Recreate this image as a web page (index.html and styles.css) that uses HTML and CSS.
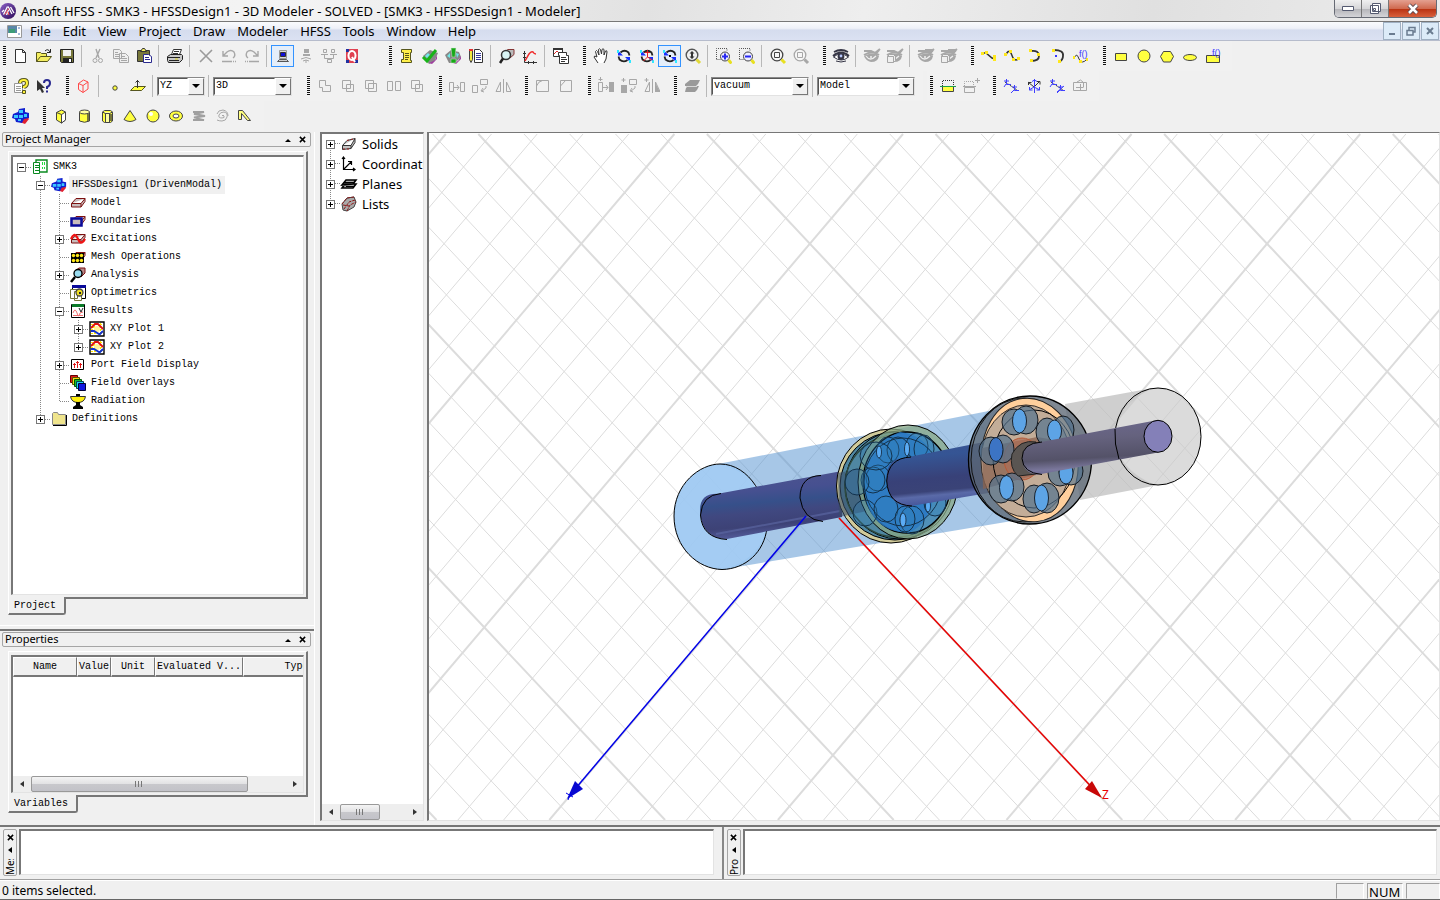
FILE: index.html
```html
<!DOCTYPE html>
<html lang="en">
<head>
<meta charset="utf-8">
<title>Ansoft HFSS</title>
<link rel="stylesheet" href="styles.css">
</head>
<body>
<svg class="defs" aria-hidden="true">
  <defs>
    <linearGradient id="rod" x1="0" y1="0" x2="0.18" y2="1"><stop offset="0" stop-color="#50558f"/><stop offset=".35" stop-color="#465090"/><stop offset=".52" stop-color="#36508a"/><stop offset=".66" stop-color="#404880"/><stop offset=".85" stop-color="#3d4276"/><stop offset="1" stop-color="#525a98"/></linearGradient>
    <linearGradient id="rod2" x1="0" y1="0" x2="0.18" y2="1"><stop offset="0" stop-color="#3f4f92"/><stop offset=".35" stop-color="#355594"/><stop offset=".65" stop-color="#384178"/><stop offset=".82" stop-color="#3a4377"/><stop offset=".88" stop-color="#5a6aa8"/><stop offset="1" stop-color="#45559a"/></linearGradient>
    <linearGradient id="rod3" x1="0" y1="0" x2="0.15" y2="1"><stop offset="0" stop-color="#6d6990"/><stop offset=".4" stop-color="#65627e"/><stop offset=".75" stop-color="#545268"/><stop offset=".92" stop-color="#7a779c"/><stop offset="1" stop-color="#6d6a94"/></linearGradient>
    <linearGradient id="logo" x1="0" y1="0" x2="1" y2="1"><stop offset="0" stop-color="#8c62c8"/><stop offset="1" stop-color="#2c0a58"/></linearGradient>
    <g id="down-right"><path class="major" d="M0 0l644 686"/><path class="minor" d="M45.7 0l644 686M91.4 0l644 686M137.2 0l644 686M182.9 0l644 686"/></g>
    <g id="down-left"><path class="major" d="M0 0l-582.3 686"/><path class="minor" d="M45.7 0l-582.3 686M91.4 0l-582.3 686M137.2 0l-582.3 686M182.9 0l-582.3 686"/></g>
    <symbol id="s-cut" viewBox="0 0 16 16"><path fill="none" stroke="#a7a7a7" stroke-width="1.4" d="M6 1l3 9M10 1L6 10"/><circle cx="5" cy="12.500" r="2" fill="none" stroke="#a7a7a7"/><circle cx="10.500" cy="12.500" r="2" fill="none" stroke="#a7a7a7"/></symbol>
    <symbol id="s-undo" viewBox="0 0 16 16"><path fill="none" stroke="#a7a7a7" stroke-width="1.400" d="M2 3v5h5M2.500 7.500L6 4q4-3 7 0 2 4-1 6"/><path stroke="#a7a7a7" stroke-width="1.500" stroke-dasharray="10 1 1 1 1 1" d="M1 13.500h14"/></symbol>
    <symbol id="s-rot" viewBox="0 0 16 16"><path fill="none" stroke="#222" stroke-width="1.800" d="M4.500 4.500q4-3.500 8 0l1 3M11.500 12q-4 3-8-.5l-1-3"/><path fill="#1830ff" d="M2 2.500v5h5zM14 14V9H9z"/><path fill="#30e8ff" d="M1 2h2v3H1zM13 12h2v3h-2z"/></symbol>
    <symbol id="s-eye" viewBox="0 0 18 16"><path fill="none" stroke="currentColor" stroke-width="1.800" d="M2 4q7-4 14 0M1 8q8-7 16 0"/><path fill="#fff" stroke="currentColor" d="M1.500 9q7-6 15 0-7 6-15 0z"/><circle cx="9" cy="8.500" r="3.400" fill="currentColor"/><circle cx="9" cy="8" r="1.400" fill="#b8c8ff"/><path stroke="currentColor" d="M4 13q5 2 10 0" fill="none"/></symbol>
    <symbol id="s-eyex" viewBox="0 0 18 16"><path fill="none" stroke="#a7a7a7" stroke-width="2" d="M1 3h7l4 2 5-4M1 7q8-5 15 0M16 2l-6 7"/><path fill="#a7a7a7" d="M1 8q8-5 15 0-1 6-8 6-5-1-7-6z"/><path stroke="#efefef" stroke-width="1.300" fill="none" d="M3 8q4 6 10 0M7 9h2"/></symbol>
    <symbol id="s-eyebox" viewBox="0 0 18 16"><use href="#s-eyex"/><path fill="#efefef" stroke="#a7a7a7" d="M1.500 8.500l2-2h6v6l-2 2h-6zM1.500 8.500h6v6M7.500 8.500l2-2"/></symbol>
    <symbol id="s-zoomsel" viewBox="0 0 16 16"><path fill="none" stroke="#555" stroke-dasharray="1 1" d="M.5 11V.5H11v3M.5 11.500H5"/><circle cx="9" cy="8.500" r="4.500" fill="#eef" stroke="#444"/><path stroke="#e8e020" stroke-width="3" d="M12.500 12l3 3.500"/></symbol>
    <symbol id="s-mag" viewBox="0 0 16 16"><circle cx="7" cy="7" r="5.800" fill="#fff" fill-opacity=".4" stroke="currentColor" stroke-width="1.300"/><path fill="none" stroke="currentColor" d="M4.500 4.500h5v5h-5z"/></symbol>
    <symbol id="s-moved" viewBox="0 0 16 16"><path fill="none" stroke="#a7a7a7" d="M.5 4.500h4v9h-4zM11.500 4.500h4v9h-4zM5 9.500h5M8 7l2 2.500-2 2.500"/></symbol>
    <symbol id="s-rotd" viewBox="0 0 16 16"><path fill="none" stroke="#a7a7a7" d="M.5 7.500h5v7h-5zM8.500 1.500h7v5h-7zM14 8v2l-4 3M11 10l-2 3 3 1"/></symbol>
    <symbol id="s-mir" viewBox="0 0 16 16"><path fill="none" stroke="#a7a7a7" d="M8.500 1v14M1 13.500h4.500V4zM11.500 4v9.500H16z"/></symbol>
    <symbol id="s-cs" viewBox="0 0 16 16"><path fill="none" stroke="#333" stroke-dasharray="2 1" d="M2 4l12 8"/><path fill="none" stroke="#4040ff" d="M3.500 1v5.500H8M3 6l-2 3M1 3h5M11.500 7v5.500H16M11 12l-3 3M9 9h5"/></symbol>
    <symbol id="s-box" viewBox="0 0 16 16"><path fill="#c8bcbc" stroke="#7c1010" d="M1.500 8.500L6 3.500h9v3l-4 5.500H1.500zM1.500 8.500H11l4-5M11 8.500V12"/></symbol>
    <symbol id="s-hfss" viewBox="0 0 18 16"><path fill="#e02030" d="M5 13l8 3 4-5-3-4z"/><path fill="#1020d0" d="M1 6l5-2 1-3 6-1v4l4 1v5l-5 1-2 4-6-1-1-3-3-1z"/><path fill="#38c8ff" d="M2 7h4v3H2zM7 2h4v3H7zM7 7h4v3H7zM6 11h3v2H6zM12 6h3v3h-3z"/></symbol>
    <symbol id="s-plot" viewBox="0 0 16 16"><path fill="#fff" stroke="#000" stroke-width="1.400" d="M1 1h14v14H1z"/><path stroke="#ffe600" stroke-dasharray="2 1" d="M2 3.500h12M2 8.500h12M3 6.500h10M2 12.500h12M5.500 2v12M11.500 2v12"/><circle cx="8" cy="8" r="3" fill="#fff39a"/><path fill="none" stroke="#e01010" stroke-width="1.800" d="M2 7l4-4h3l5 5"/><path fill="none" stroke="#1030d0" stroke-width="1.800" d="M2 10h3l5 3h1l3-3"/></symbol>
    <symbol id="s-folder" viewBox="0 0 16 16"><path fill="#efe48c" stroke="#888" d="M1.500 13.500v-11l1-1h4l1 2h7v10z"/><path fill="none" stroke="#000" d="M2 14.500h13.500V4"/></symbol>
    <symbol id="s-close" viewBox="0 0 8 8"><path stroke="#000" stroke-width="1.700" d="M1 1l6 6M7 1L1 7"/></symbol>
  </defs>
</svg>

<header class="titlebar">
  <svg class="logo" viewBox="0 0 16 16"><circle cx="8" cy="8" r="8" fill="url(#logo)"/><path stroke="#fff" stroke-width="1.300" d="M2 9l2-2M3.500 11.500l4-8M6.500 12l2-5M8 3.500l4 7.500M10.500 4l3.500 6"/><path stroke="#ff5a50" d="M5 11.500l3.500-6M9 12l-1-3"/></svg>
  <h1>Ansoft HFSS - SMK3 - HFSSDesign1 - 3D Modeler - SOLVED - [SMK3 - HFSSDesign1 - Modeler]</h1>
  <div class="winbtns">
    <button aria-label="Minimize"><svg width="12" height="6"><path fill="#fff" stroke="#555a70" d="M.5.5h11v4H.5z"/></svg></button>
    <button aria-label="Restore"><svg width="13" height="12"><path fill="#fff" stroke="#555a70" d="M3.500.5h8v8h-8zM1.500 2.500h8v8h-8zM4.500 5.500h2v2h-2z"/></svg></button>
    <button class="x" aria-label="Close"><svg width="14" height="12"><path stroke="#5a4850" stroke-width="4.500" d="M3 2l8 8M11 2l-8 8"/><path stroke="#fff" stroke-width="2.500" d="M3 2l8 8M11 2l-8 8"/></svg></button>
  </div>
</header>

<nav class="menubar">
  <svg class="doc" width="15" height="13"><path fill="#fff" stroke="#999" d="M.5.5h14v12H.5z"/><path fill="#5a86a8" d="M1 1h9v7H1z"/><path fill="#3c9c78" d="M2 4h6v4H2z"/><path stroke="#4878b8" d="M11 3h2M11 9h2"/></svg>
  <button>File</button><button>Edit</button><button>View</button><button>Project</button><button>Draw</button><button>Modeler</button><button>HFSS</button><button>Tools</button><button>Window</button><button>Help</button>
  <div class="mdibtns">
    <button aria-label="Minimize document"><svg width="10" height="10"><path stroke="#6a7c90" stroke-width="2" d="M2 8h6"/></svg></button>
    <button aria-label="Restore document"><svg width="10" height="10"><path fill="none" stroke="#6a7c90" stroke-width="1.500" d="M3 4V1.500h6V6H7M1 4.500h6V9H1z"/></svg></button>
    <button aria-label="Close document"><svg width="10" height="10"><path stroke="#6a7c90" stroke-width="2" d="M2 2l6 6M8 2L2 8"/></svg></button>
  </div>
</nav>

<div class="toolbars">
  <div class="row">
    <div class="tb wide-end"><i class="grip"></i>
      <button aria-label="New"><svg class="ic" viewBox="0 0 16 16"><path fill="#fff" stroke="#333" d="M2.500 1.500h7l3 3v10h-10zM9.500 1.500v3h3"/></svg></button>
      <button aria-label="Open"><svg class="ic" viewBox="0 0 16 16"><path fill="#f4ee60" stroke="#55551c" d="M.5 13.500v-9h4l1 1h5v3M.5 13.500l4-5h11l-4 5z"/><path fill="none" stroke="#222" d="M9 3q3-3 5 1M14.500 1v3.500H11"/></svg></button>
      <button aria-label="Save"><svg class="ic" viewBox="0 0 16 16"><path fill="#77773a" stroke="#222" d="M1.500 1.500h13v13h-12l-1-1z"/><path fill="#efefef" d="M4 2h8v6H4z"/><path fill="#222" d="M4 10h9v5H4z"/><path fill="#fff" d="M10 11h2v3h-2z"/></svg></button>
      <i class="sep"></i>
      <button aria-label="Cut"><svg class="ic"><use href="#s-cut"/></svg></button>
      <button aria-label="Copy"><svg class="ic" viewBox="0 0 16 16"><path fill="#efefef" stroke="#a7a7a7" d="M.5 1.500h6l2 2v7h-8zM6.500 5.500h6l3 3v6h-9zM2 4.500h3M2 6.500h4M2 8.500h4M8 8.500h4M8 10.500h6M8 12.500h6"/></svg></button>
      <button aria-label="Paste"><svg class="ic" viewBox="0 0 16 16"><path fill="#77773a" stroke="#333" d="M1.500 2.500h12v11h-12z"/><path fill="#f4ee60" stroke="#333" d="M4.500 3.500l2-3h2l2 3z"/><path fill="#fff" stroke="#2a2a90" d="M7.500 6.500h5l3 2v6h-8zM9 9.500h4M9 11.500h5"/></svg></button>
      <i class="sep"></i>
      <button aria-label="Print"><svg class="ic" viewBox="0 0 16 16"><path fill="#fff" stroke="#333" d="M4.500 6.500l2-5h8l-2 5zM7 3.500h5M6 5.500h5"/><path fill="#c8c8c8" stroke="#222" d="M.5 8.500l3-2h11l1 1v4l-3 3h-11l-1-2z"/><path stroke="#222" d="M1 9.500h12M2 12.500h10"/><path stroke="#d8d020" d="M8 11h3"/></svg></button>
      <i class="sep"></i>
      <button aria-label="Delete"><svg class="ic" viewBox="0 0 16 16"><path stroke="#9a9a9a" stroke-width="1.600" d="M2 2l12 12M14 2L2 14"/></svg></button>
      <button aria-label="Undo"><svg class="ic"><use href="#s-undo"/></svg></button>
      <button aria-label="Redo"><svg class="ic flip"><use href="#s-undo"/></svg></button>
      <i class="sep"></i>
      <button class="on" aria-label="Local machine"><svg class="ic" viewBox="0 0 16 16"><path fill="#ddd" stroke="#999" d="M4.500 2.500h7v8h-7z"/><path fill="#1010d8" stroke="#333" d="M5.500 4.500h5v4h-5z"/><path fill="#ccc" stroke="#555" d="M2.500 13.500l2-2h7l2 2z"/></svg></button>
      <button aria-label="Remote"><svg class="ic" viewBox="0 0 16 16"><path fill="#a7a7a7" d="M6 1h5v4H6zM5 6h7v2H5z"/><path fill="none" stroke="#a7a7a7" d="M3 11q5-3 10 0M5 13q3-2 6 0M8 12v3"/></svg></button>
      <button aria-label="Distributed"><svg class="ic" viewBox="0 0 16 16"><path fill="none" stroke="#a7a7a7" d="M2.500 1.500h3v3h-3zM10.500 1.500h3v3h-3zM6.500 11.500h4v3h-4zM3.500 7v3.500h9V7"/><path fill="#a7a7a7" d="M0 6h7v1H0zM9 6h7v1H9z"/></svg></button>
      <button aria-label="Queue"><svg class="ic" viewBox="0 0 16 16"><path fill="#e04050" d="M2 1h12v14H2z"/><path fill="#2030a0" d="M2 1h3v3H2zM2 12h3v3H2zM11 12h3v3h-3z"/><ellipse cx="8" cy="7.500" rx="3.500" ry="4.500" fill="none" stroke="#fff" stroke-width="2"/><path stroke="#fff" stroke-width="2" d="M8 9l3 5"/></svg></button>
    </div>
    <div class="tb"><i class="grip"></i>
      <button aria-label="Notes"><svg class="ic" viewBox="0 0 16 16"><path fill="#fff04a" stroke="#55551c" d="M2.500 1.500h10v3h-1v8h1v2h-10v-3h2v-7h-2zM6 5.500h4M6 7.500h4M6 9.500h4M6 11.500h3"/></svg></button>
      <button aria-label="Validate"><svg class="ic" viewBox="0 0 16 16"><path fill="#888" d="M1 8l7-6 8 3-4 9-5 2z"/><path fill="#a040a0" d="M7 15l6-3 2-5v4l-5 5z"/><path fill="#70e8e8" d="M3 8l3-3 2 2-3 3z"/><path fill="none" stroke="#18b418" stroke-width="3" d="M1 9l4 4L14 2"/></svg></button>
      <button aria-label="Analyze"><svg class="ic" viewBox="0 0 16 16"><path fill="#888" d="M0 7l6-5 8 2 2 5-6 6H4z"/><path fill="#a040a0" d="M8 15l5-2 3-5v3l-5 5z"/><path fill="#70e8e8" d="M2 8l3-3v5zM11 5l3 1-2 4z"/><path fill="#18a818" stroke="#cfe8cf" stroke-width=".5" d="M6 0h5L10 9H7zM6 11h5v4H6z"/></svg></button>
      <button aria-label="Solution data"><svg class="ic" viewBox="0 0 16 16"><path fill="#f4e840" stroke="#444" d="M1.500 2.500h3v9l-1.500 3-1.500-3z"/><path fill="#e03030" d="M1 1h4v2H1z"/><path fill="#fff" stroke="#333" d="M6.500 1.500h5l3 3v10h-8z"/><path stroke="#3838a0" d="M8 5.500h5M8 7.500h5M8 9.500h5M8 11.500h5"/></svg></button>
      <i class="sep"></i>
      <button aria-label="Inspect"><svg class="ic" viewBox="0 0 16 16"><path fill="#bbb" stroke="#843434" d="M5 4l4-2.500h6v5L11 10"/><circle cx="7" cy="7" r="4.500" fill="#d8f4f4" stroke="#333" stroke-width="1.500"/><path stroke="#222" stroke-width="2.500" d="M4 10.500L1 15"/></svg></button>
      <button aria-label="Report"><svg class="ic" viewBox="0 0 16 16"><path fill="none" stroke="#333" d="M2.500 3v11.500H15M1 5.500h3M1 9.500h3M6.500 13v3M11.500 13v3"/><path fill="none" stroke="#f02828" stroke-width="1.500" d="M3 13l4-7q2-3 4-2 1 2 3 2"/></svg></button>
      <i class="sep"></i>
      <button aria-label="Copy image"><svg class="ic" viewBox="0 0 16 16"><path fill="#fff" stroke="#333" d="M.5.5h9v8h-9z"/><path fill="#333" d="M0 0h10v2H0z"/><path fill="none" stroke="#e03030" d="M1 6l3-3 3 3"/><path fill="#fff" stroke="#333" d="M5.500 4.500h8v3h2v8h-9v-8h-1zM8 9.500h5M8 11.500h6M8 13.500h4"/></svg></button>
    </div>
    <div class="tb"><i class="grip"></i>
      <button aria-label="Pan"><svg class="ic" viewBox="0 0 16 16"><path fill="#fff" stroke="#333" d="M5 15L1 9q0-2 3 0L2.500 3.500q1-2 2 0L6 7 5.500 1.500q1-1.500 2 0L8.500 6 9 1.500q1-1.500 2 0L11 7l1.500-4q1.500-1 1.500 1L13 11l-2 4"/></svg></button>
      <button aria-label="Rotate"><svg class="ic"><use href="#s-rot"/></svg></button>
      <button aria-label="Rotate axis"><svg class="ic" viewBox="0 0 16 16"><use href="#s-rot"/><path fill="none" stroke="#e02020" d="M8.500 2v7l-4 4M8.500 9l5 3M6 4.500h5"/></svg></button>
      <button class="on" aria-label="Rotate screen"><svg class="ic" viewBox="0 0 16 16"><use href="#s-rot"/><path fill="#000" d="M7 7h2v2H7z"/></svg></button>
      <button aria-label="Dynamic zoom"><svg class="ic" viewBox="0 0 16 16"><circle cx="7" cy="7" r="5.800" fill="none" stroke="#555" stroke-width="1.400"/><path stroke="#333" stroke-width="2" d="M7 4v6"/><path fill="#333" d="M4.500 5.500L7 3l2.500 2.500zM4.500 8.500L7 11l2.500-2.500z"/><path stroke="#e0d838" stroke-width="3" d="M11.500 11.500l3.500 3.500"/></svg></button>
      <i class="sep"></i>
      <button aria-label="Zoom in"><svg class="ic" viewBox="0 0 16 16"><use href="#s-zoomsel"/><path stroke="#2828f0" stroke-width="2" d="M9 5.500v6M6 8.500h6"/></svg></button>
      <button aria-label="Zoom out"><svg class="ic" viewBox="0 0 16 16"><use href="#s-zoomsel"/><path stroke="#2828f0" stroke-width="2" d="M6 8.500h6"/></svg></button>
      <i class="sep"></i>
      <button aria-label="Fit all"><svg class="ic" viewBox="0 0 16 16"><use href="#s-mag" color="#444"/><path stroke="#e8e020" stroke-width="3" d="M11.500 11.500l3.500 3.500"/></svg></button>
      <button aria-label="Fit selection"><svg class="ic" viewBox="0 0 16 16"><use href="#s-mag" color="#a7a7a7"/><path stroke="#a7a7a7" stroke-width="3" d="M11.500 11.500l3.500 3.500"/></svg></button>
    </div>
    <div class="tb"><i class="grip"></i>
      <button aria-label="Visibility"><svg class="ic w18" color="#353545"><use href="#s-eye"/></svg></button>
      <i class="sep"></i>
      <button aria-label="Hide"><svg class="ic w18"><use href="#s-eyex"/></svg></button>
      <button aria-label="Hide all"><svg class="ic w18"><use href="#s-eyebox"/></svg></button>
      <i class="sep"></i>
      <button aria-label="Show"><svg class="ic w18"><use href="#s-eyex"/><path fill="#a7a7a7" d="M8 1h8v3H8z"/></svg></button>
      <button aria-label="Show all"><svg class="ic w18"><use href="#s-eyebox"/><path fill="#a7a7a7" d="M8 1h8v3H8z"/></svg></button>
    </div>
    <div class="tb"><i class="grip"></i>
      <button aria-label="Line"><svg class="ic" viewBox="0 0 16 16"><path stroke="#333" stroke-width="1.500" fill="none" d="M2 5h3l6 5 3 1"/><path fill="#ffe81c" d="M0 4h3v3H0zM4 3h3v3H4zM12 7h3v3h-3zM12 10h3v3h-3z"/></svg></button>
      <button aria-label="Spline"><svg class="ic" viewBox="0 0 16 16"><path stroke="#333" stroke-width="1.500" fill="none" d="M2 7q2-6 5-2l2 5q3 4 6 0"/><path fill="#ffe81c" d="M0 5h3v3H0zM5 2h3v3H5zM8 10h3v3H8zM13 9h3v3h-3z"/></svg></button>
      <button aria-label="Arc"><svg class="ic" viewBox="0 0 16 16"><path stroke="#333" stroke-width="1.800" fill="none" d="M4 3q8-1 8 5 0 5-8 5"/><path fill="#ffe81c" d="M2 1h3v3H2zM10 5h3v3h-3zM3 11h3v3H3z"/></svg></button>
      <button aria-label="Center arc"><svg class="ic" viewBox="0 0 16 16"><path stroke="#333" stroke-width="1.800" fill="none" d="M4 2q10 0 9 6 0 4-4 6"/><path fill="#ffe81c" d="M2 1h3v3H2zM8 12h3v3H8z"/><path fill="#3838ff" d="M5 7h2v2H5z"/></svg></button>
      <button aria-label="Equation curve"><svg class="ic" viewBox="0 0 16 16"><path stroke="#333" fill="none" d="M1 10q3-6 5 1 3 6 8 0"/><path fill="#ffe81c" d="M0 8h2v3H0zM6 12h3v3H6zM13 10h2v3h-2z"/><text x="6" y="9" class="fx">f()</text></svg></button>
    </div>
    <div class="tb"><i class="grip"></i>
      <button aria-label="Rectangle"><svg class="ic" viewBox="0 0 16 16"><path fill="#ffff40" stroke="#444" d="M2.500 5.500h11v7h-11z"/></svg></button>
      <button aria-label="Circle"><svg class="ic" viewBox="0 0 16 16"><circle cx="8" cy="8" r="6" fill="#ffff40" stroke="#444"/></svg></button>
      <button aria-label="Polygon"><svg class="ic" viewBox="0 0 16 16"><path fill="#ffff40" stroke="#444" d="M4.500 3.500h7l3 5-3 5.500h-7l-3-5.500z"/></svg></button>
      <button aria-label="Ellipse"><svg class="ic" viewBox="0 0 16 16"><ellipse cx="8" cy="9.500" rx="6.500" ry="3" fill="#ffff40" stroke="#444"/></svg></button>
      <button aria-label="Equation surface"><svg class="ic" viewBox="0 0 16 16"><path fill="#ffff40" stroke="#444" d="M1.500 7.500h13v7h-13z"/><text x="7" y="8" class="fx">f()</text></svg></button>
    </div>
  </div>

  <div class="row">
    <div class="tb"><i class="grip"></i>
      <button aria-label="Help topics"><svg class="ic" viewBox="0 0 16 16"><path fill="#fff" stroke="#999" d="M1.500 5.500h8v9h-8zM3 8.500h5M3 10.500h5M3 12.500h5"/><path fill="none" stroke="#555520" stroke-width="4" d="M7 5q0-3 4-3 3 0 3 3t-3 4v1"/><path fill="none" stroke="#fff23a" stroke-width="2" d="M7 5q0-3 4-3 3 0 3 3t-3 4v1"/><path fill="#fff23a" stroke="#555520" d="M9.500 12.500h3v3h-3z"/></svg></button>
      <button aria-label="What's this"><svg class="ic" viewBox="0 0 16 16"><path fill="#333" d="M1 2v11l3-2 2 4 2-1-2-4h3z"/><path fill="none" stroke="#2a2a90" stroke-width="2" d="M8 5q0-3 3-3t3 3-3 4v2M11 12.500v2"/></svg></button>
    </div>
    <div class="tb"><i class="grip"></i>
      <button aria-label="Solid"><svg class="ic" viewBox="0 0 16 16"><path fill="none" stroke="#ff4848" d="M2.500 5.500l5-3.500 4.500 2v7l-5 3.500-4.500-3zM2.500 5.500l4.500 2 5-3.500M7 7.500v7"/></svg></button>
      <i class="sep"></i>
      <button aria-label="Point"><svg class="ic" viewBox="0 0 16 16"><circle cx="8" cy="10" r="2.200" fill="#ffff40" stroke="#444"/></svg></button>
      <button aria-label="Plane"><svg class="ic" viewBox="0 0 16 16"><path fill="#ffff40" stroke="#555520" d="M.5 12.500l4-4h11l-4 4z"/><path stroke="#333" d="M7.500 2v8M5.500 4.500l2-2 2 2" fill="none"/></svg></button>
      <i class="sep"></i>
      <span class="combo c1"><select aria-label="Drawing plane"><option>YZ</option></select><i></i></span>
      <i class="sep"></i>
      <span class="combo c2"><select aria-label="Movement mode"><option>3D</option></select><i></i></span>
    </div>
    <div class="tb far"><i class="grip"></i>
      <button aria-label="Unite"><svg class="ic" viewBox="0 0 16 16"><path fill="none" stroke="#a7a7a7" d="M2.500 2.500h6v5h5v6h-8v-4h-3z"/></svg></button>
      <button aria-label="Subtract"><svg class="ic" viewBox="0 0 16 16"><path fill="#f1f1f1" stroke="#a7a7a7" d="M2.500 2.500h8v8h-8zM6.500 6.500h7v7h-7z"/></svg></button>
      <button aria-label="Intersect"><svg class="ic" viewBox="0 0 16 16"><path fill="none" stroke="#a7a7a7" d="M2.500 2.500h8v8h-8zM5.500 5.500h8v8h-8z"/></svg></button>
      <button aria-label="Split"><svg class="ic" viewBox="0 0 16 16"><path fill="none" stroke="#a7a7a7" d="M6.500 3.500h-5v9h5zM9.500 3.500h5v9h-5z"/></svg></button>
      <button aria-label="Imprint"><svg class="ic" viewBox="0 0 16 16"><path fill="none" stroke="#a7a7a7" d="M2.500 2.500h8v8h-8zM6.500 6.500h7v7h-7z"/></svg></button>
    </div>
    <div class="tb"><i class="grip"></i>
      <button aria-label="Move"><svg class="ic"><use href="#s-moved"/></svg></button>
      <button aria-label="Rotate object"><svg class="ic"><use href="#s-rotd"/></svg></button>
      <button aria-label="Mirror"><svg class="ic"><use href="#s-mir"/></svg></button>
    </div>
    <div class="tb"><i class="grip"></i>
      <button aria-label="Fillet"><svg class="ic" viewBox="0 0 16 16"><path fill="none" stroke="#a7a7a7" d="M1.500 2.500h12v11h-12zM1.500 8q2-5 6-5.500"/></svg></button>
      <button aria-label="Chamfer"><svg class="ic" viewBox="0 0 16 16"><path fill="none" stroke="#a7a7a7" d="M2.500 2.500h11v11h-11zM2.500 8l5-5.500"/></svg></button>
    </div>
    <div class="tb"><i class="grip"></i>
      <button aria-label="Duplicate along line"><svg class="ic" viewBox="0 0 16 16"><use href="#s-moved"/><path fill="#a7a7a7" d="M11 4h5v10h-5z"/><path stroke="#a7a7a7" d="M2.500-1v4M.5 1.500h4"/></svg></button>
      <button aria-label="Duplicate around axis"><svg class="ic" viewBox="0 0 16 16"><use href="#s-rotd"/><path fill="#a7a7a7" d="M0 7h6v8H0z"/><path stroke="#a7a7a7" d="M2.500 0v4M.5 2h4"/></svg></button>
      <button aria-label="Duplicate mirror"><svg class="ic" viewBox="0 0 16 16"><use href="#s-mir"/><path fill="#a7a7a7" d="M11 4v10h5z"/><path stroke="#a7a7a7" d="M2.500 0v4M.5 2h4"/></svg></button>
    </div>
    <div class="tb"><i class="grip"></i>
      <button aria-label="Assign material"><svg class="ic" viewBox="0 0 16 16"><path fill="#9a9a9a" d="M1 6l5-4h10l-2 4-2 2h3l-2 4-2 2H1l1-4 2-2H1z"/><path stroke="#d8d8d8" d="M2 8.500h11"/></svg></button>
      <i class="sep"></i>
      <span class="combo c3"><select aria-label="Material"><option>vacuum</option></select><i></i></span>
      <i class="sep"></i>
      <span class="combo c3"><select aria-label="Model type"><option>Model</option></select><i></i></span>
    </div>
    <div class="tb far"><i class="grip"></i>
      <button aria-label="Section"><svg class="ic" viewBox="0 0 16 16"><path fill="none" stroke="#333" stroke-dasharray="1 1" d="M2.500 8V2.500h11V8"/><path fill="#ffff40" stroke="#444" d="M2.500 8.500h11v5h-11z"/><path stroke="#20a048" d="M0 8.500h16"/></svg></button>
      <button aria-label="Add section"><svg class="ic" viewBox="0 0 16 16"><path fill="none" stroke="#a7a7a7" d="M1.500 9.500h10v5h-10zM0 8.500h13M14.500 0v5M12 2.500h5"/><path fill="none" stroke="#a7a7a7" stroke-dasharray="1 1" d="M1.500 8V3.500h9V8"/></svg></button>
    </div>
    <div class="tb"><i class="grip"></i>
      <button aria-label="Relative CS"><svg class="ic"><use href="#s-cs"/></svg></button>
      <button aria-label="Rotated CS"><svg class="ic" viewBox="0 0 16 16"><path fill="none" stroke="#333" d="M2 4l6 5 6-6M2.500 7V4.500h3M11 3.500h3v3"/><path fill="none" stroke="#4040ff" d="M8.500 1v14M6 3.500L8.500 2 11 3.500M3 12l5-3 6 3M3.500 9v3h3M13.500 9v3h-3"/></svg></button>
      <button aria-label="Both CS"><svg class="ic" viewBox="0 0 16 16"><use href="#s-cs"/><path stroke="#4040ff" d="M8 14l7-6"/></svg></button>
      <button aria-label="Face CS"><svg class="ic" viewBox="0 0 16 16"><path fill="none" stroke="#a7a7a7" d="M1.500 4.500h13v8h-13zM5 4l3.500-2 3 2.500v5M4 9.500h7M8.500 6v6"/></svg></button>
    </div>
  </div>

  <div class="row">
    <div class="tb"><i class="grip"></i>
      <button aria-label="HFSS design"><svg class="ic w18"><use href="#s-hfss"/></svg></button>
    </div>
    <div class="tb"><i class="grip"></i>
      <button aria-label="Box"><svg class="ic" viewBox="0 0 16 16"><path fill="#ffff40" stroke="#444" d="M3.500 4.500l5-2.500 4 2v8l-4 3-5-3z"/><path fill="#fff" stroke="#444" d="M8.500 6.500l4-2.500v8l-4 3z"/><path stroke="#444" d="M3.500 4.500l5 2"/></svg></button>
      <button aria-label="Cylinder"><svg class="ic" viewBox="0 0 16 16"><path fill="#ffff40" stroke="#444" d="M3.500 4v9q5 2.500 10 0V4z"/><path fill="#77773a" d="M11 5h2v8h-2z"/><ellipse cx="8.500" cy="4" rx="5" ry="2" fill="#ffffa0" stroke="#444"/></svg></button>
      <button aria-label="Regular polyhedron"><svg class="ic" viewBox="0 0 16 16"><path fill="#ffff40" stroke="#444" d="M3.500 4l2-1.500h6l2 1.500v9l-2 1.500h-6l-2-1.500z"/><path fill="#77773a" d="M11 6h2v7h-2z"/><path stroke="#444" fill="#ffffa0" d="M6.500 5.500h4v9h-4zM3.500 4l3 1.500h4L13.500 4"/></svg></button>
      <button aria-label="Cone"><svg class="ic" viewBox="0 0 16 16"><path fill="#ffff40" stroke="#444" d="M8 2.500l6 9q-6 4-12 0z"/></svg></button>
      <button aria-label="Sphere"><svg class="ic" viewBox="0 0 16 16"><circle cx="8" cy="8" r="6" fill="#ffff40" stroke="#444"/><circle cx="6" cy="6" r="2" fill="#fff"/></svg></button>
      <button aria-label="Torus"><svg class="ic" viewBox="0 0 16 16"><ellipse cx="8" cy="8" rx="6.500" ry="5" fill="#ffff40" stroke="#444"/><ellipse cx="8" cy="8" rx="3" ry="2" fill="#fff" stroke="#444"/></svg></button>
      <button aria-label="Helix"><svg class="ic" viewBox="0 0 16 16"><path stroke="#a0a0a0" stroke-width="1.800" fill="none" d="M2 4h11l-10 2 11 2-11 1.500 10 2.500H2"/></svg></button>
      <button aria-label="Spiral"><svg class="ic" viewBox="0 0 16 16"><path stroke="#a7a7a7" fill="none" d="M8 8q1-2 2 0t-2 2q-4 0-3-3 1-3 5-3 4 1 3 5-1 4-5 4-3 0-5-1M3 6q1-4 6-4 5 1 5 6"/></svg></button>
      <button aria-label="Bondwire"><svg class="ic" viewBox="0 0 16 16"><path fill="#ffff80" stroke="#444" d="M1.500 11.500v-9h4l8 10h-3l-6-7v6z"/></svg></button>
    </div>
  </div>
</div>

<main class="work">
  <aside class="dock">
    <section class="pane grow">
      <div class="cap"><h2>Project Manager</h2><button aria-label="Collapse"><svg width="6" height="4"><path d="M0 4l3-3 3 3z"/></svg></button><button aria-label="Close"><svg width="7" height="7"><use href="#s-close"/></svg></button></div>
      <div class="frame"><div class="well">
        <ul class="tree">
          <li class="root"><div><button class="ex" aria-label="Collapse SMK3"></button><svg class="ic" viewBox="0 0 16 16"><path fill="#fff" stroke="#0a8a20" stroke-width="1.400" d="M4 1h11v12H4z"/><path fill="#20e040" d="M10 3h1v3h-1zM12 3h1v3h-1zM10 8h1v2h-1zM12 8h1v2h-1z"/><path fill="#fff" stroke="#0a8a20" d="M1.500 3.500h6v11h-6zM3 6.500h4M3 8.500h4M3 11.500h4"/></svg><span>SMK3</span></div>
            <ul>
              <li><div><button class="ex" aria-label="Collapse design"></button><svg class="ic"><use href="#s-hfss"/></svg><span class="sel">HFSSDesign1 (DrivenModal)</span></div>
                <ul>
                  <li><div><svg class="ic"><use href="#s-box"/></svg><span>Model</span></div></li>
                  <li><div><svg class="ic" viewBox="0 0 16 16"><use href="#s-box"/><path fill="#c8bcbc" stroke="#0a0a9a" stroke-width="2.500" d="M1.500 5.500h10v7h-10z"/></svg><span>Boundaries</span></div></li>
                  <li><div><button class="ex" aria-label="Expand Excitations"></button><svg class="ic" viewBox="0 0 16 16"><use href="#s-box"/><path fill="none" stroke="#f01414" stroke-width="2.200" d="M1 8q3-7 6-2l2 4q3 4 6-2"/></svg><span>Excitations</span></div></li>
                  <li><div><svg class="ic" viewBox="0 0 16 16"><use href="#s-box"/><path d="M1 4h13v10H1z"/><g fill="#ffe81c"><circle cx="3.500" cy="6.500" r="1.700"/><circle cx="7.500" cy="6.500" r="1.700"/><circle cx="11.500" cy="6.500" r="1.700"/><circle cx="3.500" cy="11.500" r="1.700"/><circle cx="7.500" cy="11.500" r="1.700"/><circle cx="11.500" cy="11.500" r="1.700"/></g></svg><span>Mesh Operations</span></div></li>
                  <li><div><button class="ex" aria-label="Expand Analysis"></button><svg class="ic" viewBox="0 0 16 16"><path fill="#b88" stroke="#7c1010" d="M5 4l4-3h6v5l-4 4"/><circle cx="8" cy="6.500" r="4" fill="#9adcf0" stroke="#000" stroke-width="1.400"/><path stroke="#000" stroke-width="2.500" d="M5 10l-4 5"/></svg><span>Analysis</span></div></li>
                  <li><div><svg class="ic" viewBox="0 0 16 16"><path fill="#fff" stroke="#000" d="M2.500 1.500h13v12h-13z"/><path fill="#0a0a9a" d="M2 0h14v3H2z"/><path fill="#fff" stroke="#77773a" d="M.5 4.500h7v9h-7zM4.500 6.500h7v9h-7z"/><circle cx="9.500" cy="7.500" r="3.500" fill="#f0e020" stroke="#444" stroke-width="1.300"/><path fill="#222" d="M9 7h2v2H9z"/></svg><span>Optimetrics</span></div></li>
                  <li><div><button class="ex" aria-label="Collapse Results"></button><svg class="ic" viewBox="0 0 16 16"><path fill="#fff" stroke="#000" d="M1.500 1.500h13v13h-13z"/><path fill="#0a7a28" d="M2 1h12v3H2z"/><path fill="none" stroke="#f07070" d="M3 10q2-6 4 0t3 0l3-1M3 12.500h10"/><path fill="none" stroke="#222" d="M9 5l2 4 2-4"/></svg><span>Results</span></div>
                    <ul>
                      <li><div><button class="ex" aria-label="Expand plot 1"></button><svg class="ic"><use href="#s-plot"/></svg><span>XY Plot 1</span></div></li>
                      <li><div><button class="ex" aria-label="Expand plot 2"></button><svg class="ic"><use href="#s-plot"/></svg><span>XY Plot 2</span></div></li>
                    </ul></li>
                  <li><div><button class="ex" aria-label="Expand Port Field Display"></button><svg class="ic" viewBox="0 0 16 16"><path fill="#fff" stroke="#000" d="M1.500 2.500h12v10h-12z"/><path stroke="#e01818" fill="none" d="M4.500 6v5M7.500 4v7M10.500 6v5M3 7.500h3M6 5.500h3M9 7.500h3"/></svg><span>Port Field Display</span></div></li>
                  <li><div><svg class="ic" viewBox="0 0 16 16"><path fill="#e01818" stroke="#600" d="M.5.500h7v7h-7z"/><path fill="#f0d818" stroke="#550" d="M2.500 2.500h7v7h-7z"/><path fill="#18c030" stroke="#050" d="M4.500 4.500h7v7h-7z"/><path fill="#20d0f0" stroke="#045" d="M6.500 6.500h7v7h-7z"/><path fill="#1018e0" stroke="#003" d="M8.500 8.500h7v7h-7z"/></svg><span>Field Overlays</span></div></li>
                  <li><div><svg class="ic" viewBox="0 0 16 16"><path fill="#ffee10" stroke="#333" d="M.5 3.500h15q-1 6-7.500 6T.5 3.500z"/><path d="M6 1h4v2H6zM6 9h4v3l3 2v2H3v-2l3-2z"/></svg><span>Radiation</span></div></li>
                </ul></li>
              <li><div><button class="ex" aria-label="Expand Definitions"></button><svg class="ic"><use href="#s-folder"/></svg><span>Definitions</span></div></li>
            </ul></li>
        </ul>
      </div></div>
      <button class="tab">Project</button>
    </section>
    <section class="pane props">
      <div class="cap"><h2>Properties</h2><button aria-label="Collapse"><svg width="6" height="4"><path d="M0 4l3-3 3 3z"/></svg></button><button aria-label="Close"><svg width="7" height="7"><use href="#s-close"/></svg></button></div>
      <div class="frame"><div class="well col">
        <div class="tablebox"><table>
          <colgroup><col class="k1"><col class="k2"><col class="k3"><col class="k4"><col class="k5"></colgroup>
          <thead><tr><th>Name</th><th>Value</th><th>Unit</th><th>Evaluated V...</th><th>Type</th></tr></thead>
        </table></div>
        <div class="hs"><button aria-label="Scroll left"><svg width="4" height="6"><path d="M4 0v6L0 3z"/></svg></button><div class="track"><div class="thumb t1"></div></div><button aria-label="Scroll right"><svg width="4" height="6"><path d="M0 0v6l4-3z"/></svg></button></div>
      </div></div>
      <button class="tab">Variables</button>
    </section>
  </aside>

  <section class="objects">
    <ul class="tree big">
      <li><div><button class="ex" aria-label="Expand Solids"></button><svg class="ic" viewBox="0 0 16 16"><path fill="#c4c4c4" stroke="#333" d="M1.500 9.500L6 4.500l8-2v4l-4 6-8.500 1zM1.500 9.500H10l4-7M10 9.500v3"/><path stroke="#a02020" stroke-dasharray="2 2" d="M6 4.500l8-2M2 13h8"/></svg><span>Solids</span></div></li>
      <li><div><button class="ex" aria-label="Expand Coordinate Systems"></button><svg class="ic" viewBox="0 0 16 16"><path fill="none" stroke="#000" stroke-width="1.200" d="M2.500 1v12.500H14M1 3l1.500-2L4 3M12 12l2 1.500-2 1.500M2.500 13.500L10 6M7 5.500h3.500V9"/></svg><span>Coordinate Systems</span></div></li>
      <li><div><button class="ex" aria-label="Expand Planes"></button><svg class="ic" viewBox="0 0 16 16"><path fill="#aaa" stroke="#000" stroke-width="1.600" d="M1 9l4-5h10l-3 4zM1 12l3-4h11l-3 4z"/><path stroke="#000" d="M3 6.500h10M5 10.500h8"/></svg><span>Planes</span></div></li>
      <li><div><button class="ex" aria-label="Expand Lists"></button><svg class="ic" viewBox="0 0 16 16"><path fill="#aaa" stroke="#444" d="M1 8l5-6 7-1 2 5-2 5-7 4-4-1z"/><path stroke="#8c1818" stroke-dasharray="3 1" fill="none" d="M1 8l5-6 7-1M3 13l5-7 6-2M6 15l3-6 6-3M2 9l6 1"/></svg><span>Lists</span></div></li>
    </ul>
    <div class="hs"><button aria-label="Scroll left"><svg width="4" height="6"><path d="M4 0v6L0 3z"/></svg></button><div class="track"><div class="thumb t2"></div></div><button aria-label="Scroll right"><svg width="4" height="6"><path d="M0 0v6l4-3z"/></svg></button></div>
  </section>

  <section class="view">
    <svg class="scene" role="img" aria-label="3D model view">
      <g transform="translate(-429 -133)">
        <g class="grid" transform="translate(0 134)">
          <use href="#down-right" x="-207.500"/><use href="#down-right" x="21.100"/><use href="#down-right" x="249.700"/><use href="#down-right" x="478.300"/><use href="#down-right" x="706.900"/><use href="#down-right" x="935.500"/><use href="#down-right" x="1164.100"/><use href="#down-right" x="1392.700"/>
          <use href="#down-left" x="445.800"/><use href="#down-left" x="674.400"/><use href="#down-left" x="903"/><use href="#down-left" x="1131.600"/><use href="#down-left" x="1360.200"/><use href="#down-left" x="1588.800"/><use href="#down-left" x="1817.400"/>
        </g>
        <g class="model">
          <path fill="#5090d0" fill-opacity=".5" d="M718 464L1030 403V518L725 569q40-12 43-50-4-45-50-55z"/>
          <path fill="#9cc8f2" fill-opacity=".92" stroke="#000" d="M720 464C700 464 674 484 674 516C674 548 698 569 722 569.500C746 569 764 552 767 528C769 500 750 464 720 464z"/>
          <path fill="#bcbcbc" fill-opacity=".72" d="M1065 404L1153 388Q1116 405 1116 437T1156 485.500L1080 500z"/>
          <ellipse cx="1158" cy="436.500" rx="43" ry="48.500" fill="#c8c8c8" fill-opacity=".65" stroke="#000"/>
          <path fill="url(#rod)" d="M718 493.700L842 471V517L727 539Q704 539 700.500 516T718 493.700z"/>
          <path fill="none" stroke="#5f6ba6" stroke-opacity=".6" stroke-width="2" d="M716 534L840 511"/>
          <path fill="none" stroke="#000" d="M721 493.500Q702 495 700.500 515Q702 538 727 539.500M821 475.500Q800 476 800 498Q803 520 823 521.500"/>
          <ellipse cx="891" cy="486" rx="54.500" ry="57" fill="#d0ca9a" stroke="#000"/>
          <ellipse cx="895" cy="486" rx="55" ry="54" fill="#4f87a2" stroke="#000"/>
          <path fill="#3b4f67" fill-opacity=".6" d="M838 473l29-6v44l-28 6z"/>
          <ellipse cx="899" cy="485" rx="54" ry="54" fill="none" stroke="#000"/>
          <ellipse cx="897" cy="486" rx="52" ry="51" fill="none" stroke="#2d4a40" stroke-width="1.500"/>
          <ellipse cx="908" cy="482" rx="50" ry="57" fill="#88a886" fill-opacity=".75" stroke="#000"/>
          <ellipse cx="907" cy="482.500" rx="44" ry="50.500" fill="#5090b8" stroke="#000" stroke-width="1.300"/>
          <path fill="#2878c4" fill-opacity=".85" d="M900 432q20 2 30 18l2 55q-8 22-24 28-40-2-44-45 1-44 36-56z"/>
          <g fill="#3180bc" fill-opacity=".3" stroke="#13324c">
            <ellipse cx="888" cy="450" rx="11" ry="13"/><ellipse cx="898" cy="450" rx="11" ry="13"/><ellipse cx="917" cy="446" rx="11" ry="13"/><ellipse cx="924" cy="449" rx="10" ry="14"/>
            <ellipse cx="878" cy="478" rx="12" ry="13"/><ellipse cx="873" cy="480" rx="12" ry="13"/><ellipse cx="857" cy="482" rx="12" ry="13"/><ellipse cx="865" cy="513" rx="12" ry="13"/><ellipse cx="886" cy="509" rx="12" ry="13"/>
            <ellipse cx="912" cy="520" rx="12" ry="14"/><ellipse cx="905" cy="519" rx="10" ry="13"/><ellipse cx="935" cy="503" rx="11" ry="13"/><ellipse cx="876" cy="456" rx="16" ry="14"/><ellipse cx="903" cy="482" rx="39" ry="44" fill="none"/>
          </g>
          <g fill="#5aabf4" stroke="#123" stroke-width=".8"><ellipse cx="879" cy="452" rx="2.500" ry="6"/><ellipse cx="907" cy="449" rx="2.500" ry="7"/><ellipse cx="903" cy="520" rx="3" ry="7"/><ellipse cx="928" cy="506" rx="2.500" ry="6"/></g>
          <path fill="url(#rod2)" d="M905 457.700L1030 433V486L908 506.500Q888 504 886.700 481T905 457.700z"/>
          <path fill="none" stroke="#000" d="M911 457Q888 458 886.700 481Q888 505 912 506"/>
          <ellipse cx="1030" cy="460" rx="61.500" ry="64" fill="#5c6875" fill-opacity=".78" stroke="#000" stroke-width="1.300"/>
          <ellipse cx="1024" cy="460" rx="53" ry="62" fill="none" stroke="#111"/>
          <ellipse cx="1030" cy="460" rx="48" ry="62" fill="#ffcf9c" stroke="#222" transform="rotate(-7 1030 460)"/>
          <ellipse cx="1026" cy="461" rx="45" ry="56" fill="#c3ad98" stroke="#332c28"/>
          <path fill="#8a6350" fill-opacity=".75" d="M982 448l55-11 18 3v30l-72 19z"/>
          <ellipse cx="1022" cy="459" rx="18" ry="21" fill="#ad6c55" fill-opacity=".7" stroke="#b85a38"/>
          <ellipse cx="1034" cy="459" rx="41" ry="49" fill="none" stroke="#000"/>
          <g fill="#52728f" fill-opacity=".7" stroke="#151a20">
            <ellipse cx="1014" cy="422" rx="12" ry="13"/><ellipse cx="1026" cy="420" rx="12" ry="14"/>
            <ellipse cx="1047" cy="432" rx="11" ry="14"/><ellipse cx="1063" cy="430" rx="11" ry="14"/>
            <ellipse cx="991" cy="451" rx="12" ry="14"/><ellipse cx="1003" cy="449" rx="11" ry="14"/>
            <ellipse cx="1001" cy="489" rx="12" ry="14"/><ellipse cx="1012" cy="487" rx="12" ry="14"/>
            <ellipse cx="1034" cy="499" rx="11" ry="14"/><ellipse cx="1047" cy="498" rx="12" ry="15"/>
            <ellipse cx="1060" cy="473" rx="12" ry="13"/><ellipse cx="1071" cy="471" rx="12" ry="14"/>
          </g>
          <g fill="#5da4e6" stroke="#1a2430"><ellipse cx="1019.500" cy="421" rx="7" ry="12"/><ellipse cx="1054.500" cy="431" rx="7" ry="11"/><ellipse cx="996" cy="449.500" rx="7" ry="12" fill="#3c74c4"/><ellipse cx="1006.500" cy="487.500" rx="7" ry="12"/><ellipse cx="1041.500" cy="498" rx="7" ry="13"/><ellipse cx="1066" cy="473" rx="7" ry="11"/></g>
          <path fill="#5a5552" stroke="#222" d="M1036 442q-16-3-24 12-3 14 6 22l18-2z"/>
          <path fill="url(#rod3)" d="M1037 442.700L1158 420V452.500L1037 474.700Q1022 472 1022 458.500T1037 442.700z"/>
          <path fill="none" stroke="#000" d="M1042 442Q1022 443 1022 458.500Q1023 473 1042 474.500M1115 429Q1114 444 1119 459"/>
          <ellipse cx="1158" cy="436.300" rx="14" ry="16" fill="#8480b8" stroke="#000"/>
        </g>
        <g class="axes">
          <path stroke="#0000e8" stroke-width="1.500" d="M806 516L570 795"/><path fill="#0808d0" d="M575 781l8 8-16 10z"/><path stroke="#0000e8" d="M566 793l7 4M571 792l-3 8"/>
          <path stroke="#e80000" stroke-width="1.500" d="M839 518L1100 796"/><path fill="#c80808" d="M1092 781l-7 8 17 9z"/>
          <text x="1102" y="799">Z</text>
        </g>
      </g>
    </svg>
  </section>
</main>

<footer class="messages">
  <section><div class="vcap"><button aria-label="Close messages"><svg width="7" height="7"><use href="#s-close"/></svg></button><button aria-label="Collapse messages"><svg width="4" height="6"><path d="M4 0v6L0 3z"/></svg></button><span>Messages</span></div><div class="out"></div></section>
  <section><div class="vcap"><button aria-label="Close progress"><svg width="7" height="7"><use href="#s-close"/></svg></button><button aria-label="Collapse progress"><svg width="4" height="6"><path d="M4 0v6L0 3z"/></svg></button><span>Progress</span></div><div class="out"></div></section>
</footer>
<div class="status"><span class="msg">0 items selected.</span><span class="cell s1"></span><span class="cell s2">NUM</span><span class="cell s3"></span></div>
</body>
</html>
```
FILE: styles.css
```css
* { box-sizing: border-box; }
body { margin: 0; height: 100vh; display: flex; flex-direction: column; overflow: hidden; background: #f0f0f0; color: #000; font: 13px/18px "Noto Sans", "Open Sans", sans-serif; }
button { font: inherit; color: inherit; background: none; border: 0; padding: 0; margin: 0; }
h1, h2 { margin: 0; font: inherit; white-space: nowrap; }
ul { list-style: none; margin: 0; padding: 0; }
svg { display: block; flex: none; }
.defs { position: absolute; width: 0; height: 0; }
.ic { width: 16px; height: 16px; overflow: visible; }
.ic.w18 { width: 18px; }
.ic.flip { transform: scaleX(-1); }
.fx { font: 9px "Liberation Sans", sans-serif; fill: #3838ff; }

.titlebar { flex: none; height: 22px; display: flex; align-items: center; background: linear-gradient(100deg, #eee 0%, #f4f4f4 20%, #e2e2e2 45%, #eeeeee 60%, #e0e0e0 80%, #ececec 100%); border-bottom: 1px solid #777; }
.logo { width: 16px; height: 16px; }
.titlebar h1 { flex: 1; padding-left: 5px; line-height: 20px; }
.winbtns { display: flex; align-self: flex-start; height: 18px; margin-right: 3px; border: 1px solid #666a74; border-top: 0; border-radius: 0 0 5px 5px; overflow: hidden; }
.winbtns button { width: 27px; display: grid; place-items: center; background: linear-gradient(#f0f0f0, #d6d6d8 50%, #b4b4b8 51%, #d4d4d8); border-right: 1px solid #777; }
.winbtns .x { width: 47px; border: 0; background: linear-gradient(#e4a090, #d06a50 50%, #b83010 51%, #d8603c); }

.menubar { flex: none; height: 19px; display: flex; align-items: center; padding-left: 7px; background: linear-gradient(#fafbfd 0%, #eef1f8 35%, #d5dcee 45%, #dbe1f2 100%); border-bottom: 1px solid #b6bccc; }
.doc { margin-right: 2px; }
.menubar > button { padding: 0 6px; }
.mdibtns { display: flex; gap: 1px; margin-left: auto; padding-right: 1px; }
.mdibtns button { width: 18px; height: 18px; display: grid; place-items: center; background: #dcebf8; border: 1px solid #9fb0c2; }

.toolbars { flex: none; }
.row { display: flex; height: 30px; }
.tb { display: flex; align-items: center; padding: 0 7px 0 3px; background: #f1f1f1; }
.tb.wide-end { padding-right: 22px; }
.tb.far { margin-left: 4px; }
.grip { width: 3px; height: 20px; margin-right: 3px; background: repeating-linear-gradient(#111 0 1px, #f4f4f4 1px 2px); }
.tb { border-right: 1px solid #f1f1f1; }
.tb button { width: 23px; height: 22px; display: grid; place-items: center; }
.tb button.on { background: #e4eefa; border: 1px solid #3393ff; }
.sep { width: 8px; height: 22px; background: linear-gradient(#b8b8b8, #b8b8b8) 3px 0 / 1px 100% no-repeat; }
.combo { height: 19px; display: flex; border: 1px solid; border-color: #888 #e2e2e2 #e2e2e2 #888; background: #fff; }
.combo select { flex: 1; min-width: 0; appearance: none; border: 1px solid; border-color: #555 #fff #fff #555; border-radius: 0; background: #fff; color: #000; padding: 0 0 0 1px; font: 10px/14px "Liberation Mono", monospace; outline: 0; }
.combo i { width: 16px; border: 1px solid; border-color: #fff #777 #777 #fff; background: #f0f0f0; display: grid; place-items: center; }
.combo i::after { content: ""; border: 4px solid transparent; border-top-color: #000; border-bottom: 0; }
.c1 { width: 48px; }
.c2 { width: 79px; }
.c3 { width: 98px; }

.work { flex: 1; min-height: 0; display: flex; padding-top: 1px; }
.dock { width: 315px; display: flex; flex-direction: column; border-right: 1px solid #fff; flex: none; }
.pane { display: flex; flex-direction: column; padding: 0 3px 0 2px; }
.pane.grow { flex: 1; min-height: 0; padding-bottom: 10px; border-bottom: 1px solid #fff; }
.pane.props { height: 196px; margin-top: 3px; padding-top: 1px; padding-bottom: 12px; border-top: 2px solid #777; }
.cap { height: 15px; flex: none; display: flex; align-items: center; gap: 8px; padding: 0 4px 0 2px; border: 1px solid #a5a5a5; border-radius: 2px; font: 11px/12px "Noto Sans", sans-serif; }
.cap h2 { flex: 1; height: 13px; }
.cap button { display: grid; place-items: center; }
.frame { flex: 1; min-height: 0; margin: 4px 3px 0 6px; padding: 3px 2px 2px; border: 1px solid; border-width: 1px 2px 2px 1px; border-color: #fff #777 #777 #fff; display: flex; }
.well { flex: 1; min-width: 0; border: 2px solid; border-width: 2px 1px 1px 2px; border-color: #777 #e3e3e3 #e3e3e3 #777; background: #fff; }
.well.col { display: flex; flex-direction: column; }
.tab { align-self: flex-start; margin: -2px 0 0 6px; height: 18px; padding: 1px 8px 0 5px; background: #f0f0f0; border: 1px solid; border-width: 0 2px 2px 1px; border-color: #fff #777 #777 #fff; border-radius: 0 0 3px 0; font: 10px/16px "Liberation Mono", monospace; }

.tree { padding: 1px 0 0; font: 10px/18px "Liberation Mono", monospace; }
.tree li { background: repeating-linear-gradient(#888 0 1px, transparent 1px 2px) 9px 0 / 1px 100% no-repeat; }
.tree li:last-child { background-size: 1px 10px; }
.tree li.root { background: none; }
.tree ul { padding-left: 19px; }
.well .tree { margin-left: -1px; }
.tree li > div { display: grid; grid-template-columns: 19px 19px auto; justify-content: start; align-items: center; height: 18px; white-space: nowrap; background: repeating-linear-gradient(90deg, #888 0 1px, transparent 1px 2px) 10px 9px / 9px 1px no-repeat; }
.tree .ic { grid-column: 2; margin-left: 1px; }
.tree span { grid-column: 3; padding: 0 3px; }
.tree .sel { background: #f0f0f0; }
.ex { grid-column: 1; justify-self: center; width: 9px; height: 9px; border: 1px solid #777; background: linear-gradient(#000, #000) 1px 3px / 5px 1px no-repeat, #fff; }
.ex[aria-label^="Expand"] { background: linear-gradient(#000, #000) 1px 3px / 5px 1px no-repeat, linear-gradient(#000, #000) 3px 1px / 1px 5px no-repeat, #fff; }

.tablebox { flex: 1; overflow: hidden; }
table { width: 337px; table-layout: fixed; border-collapse: separate; border-spacing: 0; font: 10px/16px "Liberation Mono", monospace; }
.k1 { width: 64px; } .k2 { width: 34px; } .k3 { width: 44px; } .k4 { width: 88px; } .k5 { width: 107px; }
th { height: 20px; padding: 0; font-weight: normal; white-space: nowrap; background: #f0f0f0; border: 1px solid; border-width: 1px 1px 2px; border-color: #fff #777 #777 #fff; }

.hs { flex: none; height: 16px; display: flex; background: #eee; }
.hs button { width: 17px; display: grid; place-items: center; fill: #333; }
.track { flex: 1; display: flex; padding-left: 1px; }
.thumb { border: 1px solid #999; border-radius: 2px; background: repeating-linear-gradient(90deg, #777 0 1px, transparent 1px 3px) center / 8px 6px no-repeat, linear-gradient(#f4f4f4, #e2e2e4 48%, #c8c8cc 52%, #c2c2c8); }
.t1 { width: 85%; }
.t2 { width: 60%; }

.objects { flex: none; width: 104px; margin: 0 3px 4px 5px; display: flex; flex-direction: column; border: 2px solid; border-width: 2px 1px 1px 2px; border-color: #777 #e3e3e3 #e3e3e3 #777; background: #fff; }
.tree.big { flex: 1; overflow: hidden; padding: 0; margin-left: -1px; font: 13px/20px "Noto Sans", sans-serif; }
.tree.big li > div { height: 20px; }
.tree.big li:first-child { background-position: 9px 10px; }

.view { flex: 1; min-width: 0; margin-bottom: 4px; border: 1px solid; border-width: 1px 1px 1px 2px; border-color: #777 #e3e3e3 #e3e3e3 #777; background: #fff; overflow: hidden; }
.scene { width: 100%; height: 100%; }
.grid { fill: none; stroke: #dcdcdc; }
.major { stroke-width: 2; }
.minor { stroke-width: 1; }
.axes text { font: 12px "Noto Sans", sans-serif; fill: #e80000; }

.messages { flex: none; height: 55px; display: flex; border-top: 2px solid #777; border-bottom: 1px solid #a0a0a0; }
.messages section { flex: 1; display: flex; gap: 2px; padding: 2px 3px 3px; }
.messages section:first-child { border-right: 2px solid #888; padding-right: 8px; }
.vcap { width: 14px; display: flex; flex-direction: column; align-items: center; gap: 6px; padding-top: 4px; border: 1px solid #a5a5a5; border-radius: 2px; overflow: hidden; }
.vcap span { height: 19px; overflow: hidden; writing-mode: vertical-rl; transform: rotate(180deg); font: 10px/12px "Noto Sans", sans-serif; }
.out { flex: 1; border: 2px solid; border-width: 2px 1px 1px 2px; border-color: #777 #e3e3e3 #e3e3e3 #777; background: #fff; margin-bottom: 1px; }

.status { flex: none; height: 20px; display: flex; gap: 3px; align-items: flex-end; border-top: 1px solid #fff; border-bottom: 1px solid #666; font-size: 12px; }
.msg { flex: 1; padding-left: 2px; line-height: 16px; }
.cell { height: 16px; line-height: 16px; border: 1px solid; border-color: #a0a0a0 #fff transparent #a0a0a0; }
.s1 { width: 28px; }
.s2 { width: 36px; padding-left: 1px; font-size: 13px; }
.s3 { width: 34px; }
```
